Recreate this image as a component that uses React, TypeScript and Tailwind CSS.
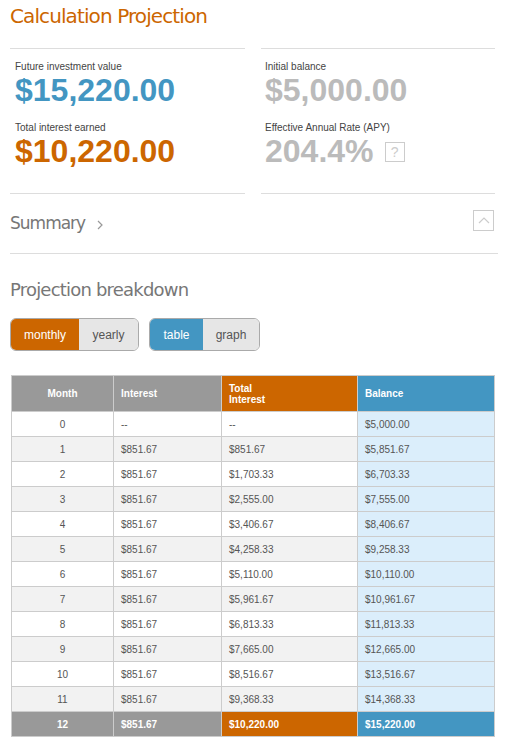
import React from "react";

const rows = [
  ["0", "--", "--", "$5,000.00"],
  ["1", "$851.67", "$851.67", "$5,851.67"],
  ["2", "$851.67", "$1,703.33", "$6,703.33"],
  ["3", "$851.67", "$2,555.00", "$7,555.00"],
  ["4", "$851.67", "$3,406.67", "$8,406.67"],
  ["5", "$851.67", "$4,258.33", "$9,258.33"],
  ["6", "$851.67", "$5,110.00", "$10,110.00"],
  ["7", "$851.67", "$5,961.67", "$10,961.67"],
  ["8", "$851.67", "$6,813.33", "$11,813.33"],
  ["9", "$851.67", "$7,665.00", "$12,665.00"],
  ["10", "$851.67", "$8,516.67", "$13,516.67"],
  ["11", "$851.67", "$9,368.33", "$14,368.33"],
];

const Stat = ({ label, value, color }: { label: string; value: string; color: string }) => (
  <div>
    <div className="text-[10px] leading-[12px] text-[#444]">{label}</div>
    <div className={`text-[32px] leading-[34px] font-bold ${color}`}>{value}</div>
  </div>
);

export default function App() {
  return (
    <div className="w-[508px] h-[745px] bg-white px-[10px] overflow-hidden font-['Liberation_Sans',Arial,sans-serif]">
      {/* TITLE */}
      <h1 className="pt-[3px] text-[20px] leading-[26px] text-[#cc6600] font-['DejaVu_Sans',sans-serif] tracking-[-0.9px]">
        Calculation Projection
      </h1>

      {/* STATS */}
      <div className="mt-[19px] flex gap-[16px]">
        <div className="w-[235px] border-y border-[#dddddd] pt-[12px] pl-[5px] h-[146px]">
          <Stat label="Future investment value" value="$15,220.00" color="text-[#4396c2]" />
          <div className="mt-[15px]">
            <Stat label="Total interest earned" value="$10,220.00" color="text-[#cc6600]" />
          </div>
        </div>
        <div className="w-[234px] border-y border-[#dddddd] pt-[12px] pl-[4px] h-[146px]">
          <Stat label="Initial balance" value="$5,000.00" color="text-[#bbbbbb]" />
          <div className="mt-[15px]">
            <div className="text-[10px] leading-[12px] text-[#444]">Effective Annual Rate (APY)</div>
            <div className="flex items-center">
              <span className="text-[32px] leading-[34px] font-bold text-[#bbbbbb]">204.4%</span>
              <span className="ml-[11px] mt-[2px] w-[20px] h-[20px] border border-[#cccccc] flex items-center justify-center text-[14px] text-[#cccccc]">?</span>
            </div>
          </div>
        </div>
      </div>

      {/* SUMMARY */}
      <div className="h-[60px] border-b border-[#dddddd] flex items-center justify-between">
        <div className="flex items-center text-[17px] text-[#777] font-['DejaVu_Sans',sans-serif] tracking-[-1px]">
          Summary
          <svg width="10" height="12" viewBox="0 0 10 12" className="ml-[10px] mt-[2px]">
            <path d="M3 2l4 4-4 4" fill="none" stroke="#999" strokeWidth="1.2" />
          </svg>
        </div>
        <div className="w-[21px] h-[21px] border border-[#cccccc] flex items-center justify-center mr-[4px] -mt-[6px]">
          <svg width="14" height="10" viewBox="0 0 14 10">
            <path d="M2 7l5-5 5 5" fill="none" stroke="#cccccc" strokeWidth="1.2" />
          </svg>
        </div>
      </div>

      {/* BREAKDOWN */}
      <h2 className="mt-[24px] text-[18px] leading-[24px] text-[#777] font-['DejaVu_Sans',sans-serif] tracking-[-0.8px]">
        Projection breakdown
      </h2>

      <div className="mt-[16px] flex gap-[10px] text-[12px]">
        <div className="flex h-[33px] rounded-[6px] border border-[#aaaaaa] overflow-hidden">
          <div className="w-[68px] bg-[#cc6600] text-white flex items-center justify-center">monthly</div>
          <div className="w-[59px] bg-[#e6e6e6] text-[#555] flex items-center justify-center">yearly</div>
        </div>
        <div className="flex h-[33px] rounded-[6px] border border-[#aaaaaa] overflow-hidden">
          <div className="w-[53px] bg-[#4396c2] text-white flex items-center justify-center">table</div>
          <div className="w-[56px] bg-[#e6e6e6] text-[#555] flex items-center justify-center">graph</div>
        </div>
      </div>

      {/* TABLE */}
      <table className="mt-[24px] ml-[1px] w-[484px] border-collapse text-[10px] text-[#555] table-fixed">
        <thead>
          <tr className="h-[36px] text-white font-bold text-left">
            <th className="w-[102px] bg-[#999999] border border-[#cccccc] text-center font-bold">Month</th>
            <th className="w-[108px] bg-[#999999] border border-[#cccccc] pl-[7px] text-left font-bold">Interest</th>
            <th className="w-[136px] bg-[#cc6600] border border-[#cccccc] pl-[7px] text-left font-bold leading-[11px] align-bottom pb-[6px]">
              Total
              <br />
              Interest
            </th>
            <th className="bg-[#4396c2] border border-[#cccccc] pl-[7px] text-left font-bold">Balance</th>
          </tr>
        </thead>
        <tbody>
          {rows.map((r, i) => (
            <tr key={r[0]} className={`h-[25px] ${i % 2 === 0 ? "bg-white" : "bg-[#f2f2f2]"}`}>
              <td className="border border-[#cccccc] text-center">{r[0]}</td>
              <td className="border border-[#cccccc] pl-[7px]">{r[1]}</td>
              <td className="border border-[#cccccc] pl-[7px]">{r[2]}</td>
              <td className="border border-[#cccccc] pl-[7px] bg-[#dbeefb]">{r[3]}</td>
            </tr>
          ))}
          <tr className="h-[25px] text-white font-bold">
            <td className="border border-[#cccccc] text-center bg-[#999999]">12</td>
            <td className="border border-[#cccccc] pl-[7px] bg-[#999999]">$851.67</td>
            <td className="border border-[#cccccc] pl-[7px] bg-[#cc6600]">$10,220.00</td>
            <td className="border border-[#cccccc] pl-[7px] bg-[#4396c2]">$15,220.00</td>
          </tr>
        </tbody>
      </table>
    </div>
  );
}
